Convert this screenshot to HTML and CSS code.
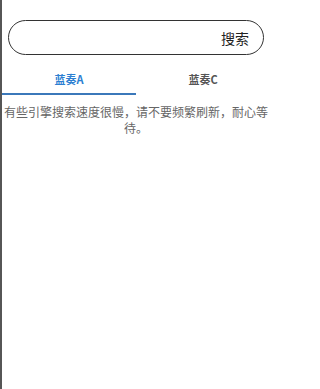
FILE: index.html
```html
<!DOCTYPE html>
<html lang="zh-CN">
<head>
<meta charset="utf-8">
<meta name="viewport" content="width=270">
<title>搜索</title>
<link rel="stylesheet" href="styles.css">
</head>
<body>
<div class="page">
  <div class="search">
    <input class="search-input" type="text" aria-label="搜索">
    <span class="search-btn">搜索</span>
  </div>
  <div class="tabs">
    <div class="tab active">蓝奏A</div>
    <div class="tab">蓝奏C</div>
  </div>
  <p class="notice">有些引擎搜索速度很慢，请不要频繁刷新，耐心等待。</p>
</div>
</body>
</html>
```
FILE: styles.css
```css
html, body {
  margin: 0;
  padding: 0;
  background: #ffffff;
}
body {
  font-family: "Noto Sans CJK SC", "Noto Sans", "Liberation Sans", sans-serif;
}
.page {
  box-sizing: border-box;
  width: 270px;
  min-height: 389px;
  border-left: 2px solid #565656;
  display: flex;
  flex-direction: column;
}
.search {
  box-sizing: border-box;
  margin: 20px 6px 0 6px;
  height: 35px;
  border: 1.5px solid #333333;
  border-radius: 18px;
  display: flex;
  align-items: center;
  padding: 0 14px 0 16px;
}
.search-input {
  flex: 1;
  min-width: 0;
  border: none;
  outline: none;
  background: transparent;
  font: inherit;
  font-size: 14px;
  padding: 0;
}
.search-btn {
  font-size: 14px;
  line-height: 16px;
  color: #222222;
}
.tabs {
  display: flex;
}
.tab {
  flex: 1;
  text-align: center;
  font-size: 11px;
  font-weight: bold;
  line-height: 14px;
  padding: 17px 0 7px;
  color: #555555;
  border-bottom: 2px solid transparent;
}
.tab.active {
  color: #2d7fd2;
  border-bottom-color: #3b78ba;
}
.notice {
  margin: 0;
  padding-top: 9px;
  text-align: center;
  font-size: 12px;
  line-height: 16px;
  color: #666666;
}
```
